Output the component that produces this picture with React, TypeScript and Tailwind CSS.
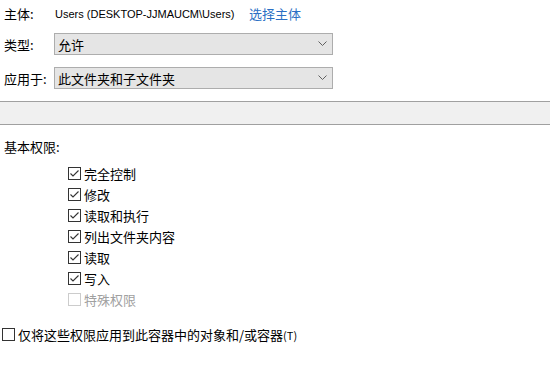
const Chevron = () => (
  <svg width="9" height="6" viewBox="0 0 9 6" className="mr-[5px]">
    <polyline points="0.5,0.5 4.5,4.5 8.5,0.5" fill="none" stroke="#606060" strokeWidth="1" />
  </svg>
);

const Select = ({ value }: { value: string }) => (
  <div className="flex h-[22px] w-[279px] items-center justify-between border border-[#adadad] bg-[#e5e5e5] pl-[3px]">
    <span>{value}</span>
    <Chevron />
  </div>
);

const Box = ({ checked, disabled }: { checked?: boolean; disabled?: boolean }) => (
  <span
    className={`flex h-[13px] w-[13px] shrink-0 items-center justify-center border bg-white ${
      disabled ? "border-[#cccccc]" : "border-[#333333]"
    }`}
  >
    {checked && (
      <svg width="11" height="11" viewBox="0 0 11 11">
        <polyline points="1.5,5.5 4,8 9.5,2.5" fill="none" stroke="#333333" strokeWidth="1.1" />
      </svg>
    )}
  </span>
);

const perms = ["完全控制", "修改", "读取和执行", "列出文件夹内容", "读取", "写入"];

export default function App() {
  return (
    <div
      className="h-[371px] w-[550px] overflow-hidden bg-white text-[13px] leading-none text-black"
      style={{ fontFamily: '"Noto Sans CJK SC", "Liberation Sans", sans-serif' }}
    >
      {/* principal */}
      <div className="flex h-[26px] items-center whitespace-nowrap">
        <span className="w-[55px] shrink-0 pl-[4px]">主体:</span>
        <span
          className="w-[194px] shrink-0 pt-[2px] text-[11px]"
          style={{ fontFamily: '"Liberation Sans", "Noto Sans CJK SC", sans-serif' }}
        >
          Users (DESKTOP-JJMAUCM\Users)
        </span>
        <span className="text-[#2b6fc4]">选择主体</span>
      </div>

      <div className="mt-[7px] flex items-center">
        <span className="w-[54px] pl-[4px]">类型:</span>
        <Select value="允许" />
      </div>

      <div className="mt-[12px] flex items-center">
        <span className="w-[54px] pl-[4px]">应用于:</span>
        <Select value="此文件夹和子文件夹" />
      </div>

      <div className="mt-[12px] h-[24px] border-y border-[#a0a0a0] bg-[#f0f0f0]" />

      <div className="mt-[12px] flex h-[18px] items-center pl-[4px]">基本权限:</div>

      <div className="mt-[8px] flex flex-col pl-[68px]">
        {perms.map((p) => (
          <div key={p} className="flex h-[21px] items-center gap-[3px]">
            <Box checked />
            <span>{p}</span>
          </div>
        ))}
        <div className="flex h-[21px] items-center gap-[3px] text-[#a0a0a0]">
          <Box disabled />
          <span>特殊权限</span>
        </div>
      </div>

      <div className="mt-[14px] flex h-[21px] items-center gap-[3px] pl-[2px]">
        <Box />
        <span>
          仅将这些权限应用到此容器中的对象和/或容器<span className="text-[11px]">(T)</span>
        </span>
      </div>
    </div>
  );
}
